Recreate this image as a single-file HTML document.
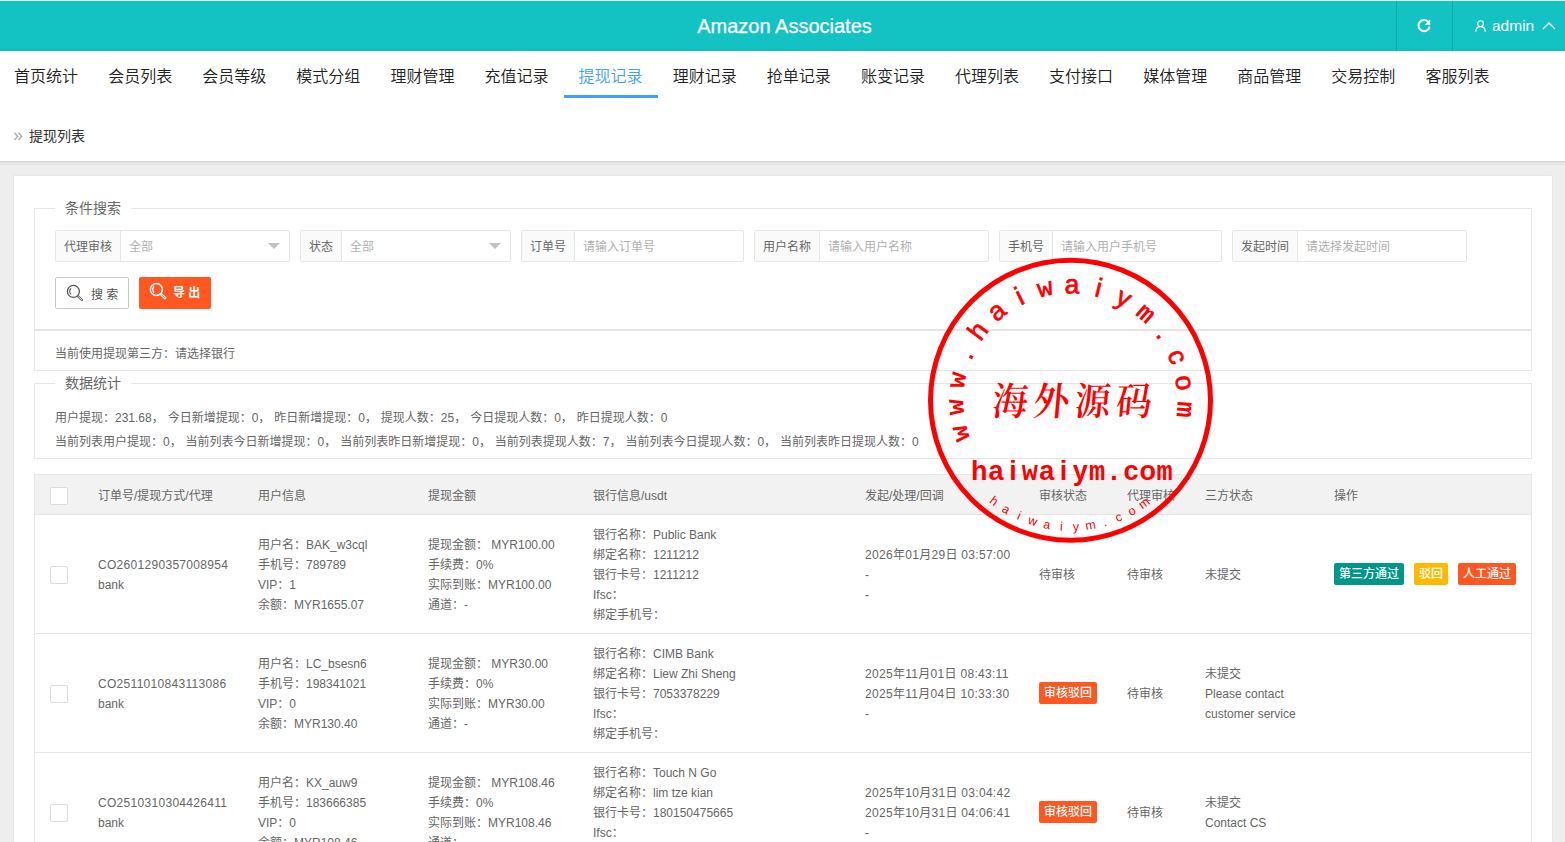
<!DOCTYPE html>
<html lang="zh-CN">
<head>
<meta charset="utf-8">
<title>Amazon Associates</title>
<style>
*{box-sizing:border-box;margin:0;padding:0}
html,body{width:1565px;height:842px;overflow:hidden}
body{background:#eeeeee;font-family:"Liberation Sans","Noto Sans CJK SC",sans-serif;font-size:12px;color:#666;position:relative}
.top{position:absolute;left:0;top:0;width:1565px;height:51px;background:#13c2c3;color:#fff;border-top:1px solid #f6e4e2}
.top .title{position:absolute;left:0;width:1569px;top:0;line-height:50px;text-align:center;font-size:20px;-webkit-text-stroke:.25px #fff}
.top .ref{position:absolute;left:1396px;top:0;width:56px;height:50px;border-left:1px solid #0ea8a9;}
.top .usr{position:absolute;left:1452px;top:0;width:113px;height:50px;border-left:1px solid #0ea8a9;font-size:15.5px;line-height:49px}
.head{position:absolute;left:-10px;top:51px;width:1585px;padding-left:10px;height:110px;background:#fff;box-shadow:0 1px 4px rgba(0,0,0,.16)}
.nav{position:absolute;left:9px;top:0;height:47px;white-space:nowrap}
.nav span{display:inline-block;width:94.1px;text-align:center;font-size:16px;line-height:52px;height:47px;color:#222;font-weight:350;vertical-align:top}
.nav span.on{color:#409eff;border-bottom:3px solid #409eff}
.crumb{position:absolute;left:24px;top:75px;font-size:14px;color:#333;line-height:20px}
.crumb i{font-style:normal;color:#aaa;display:inline-block;width:15px;font-size:18px;line-height:20px;vertical-align:top;position:relative;top:-1px;left:-1px}
.card{position:absolute;left:14px;top:176px;width:1538px;height:700px;background:#fff;box-shadow:0 0 2px rgba(0,0,0,.1)}
.fs{position:absolute;left:20px;width:1498px;border:1px solid #e6e6e6}
.fs .lg{position:absolute;left:20px;top:-11px;background:#fff;padding:0 10px;font-size:14px;line-height:20px;color:#666}
.grp{position:absolute;top:21px;height:32px;border:1px solid #e6e6e6;border-radius:2px;background:#fff;display:flex;font-size:12px;line-height:33px;overflow:hidden}
.grp .lb{background:#fafafa;border-right:1px solid #e6e6e6;padding:0 8px;color:#666;white-space:nowrap}
.grp .ph{padding-left:8px;color:#b0b0b0;flex:1;position:relative}
.grp .ph.sel:after{content:"";position:absolute;right:9px;top:12px;border:6px solid transparent;border-top-color:#c2c2c2;border-bottom-width:0}
.btn{position:absolute;top:68px;height:32px;border-radius:2px;font-size:12px;line-height:30px}
.tbl{position:absolute;left:20px;top:298px;width:1498px;border:1px solid #e6e6e6;border-bottom:0}
.tr{display:flex;border-bottom:1px solid #e6e6e6;height:119px;align-items:center}
.tr.th{height:40px;background:#f2f2f2}
.tr .td{position:relative;top:1px}
.n{letter-spacing:.3px}
.td{padding:0 15px;line-height:20px;white-space:nowrap;flex:none}
.cb{display:block;width:18px;height:18px;border:1px solid #dcdcdc;border-radius:2px;background:#fff}
.tag{display:inline-block;height:22px;line-height:23px;padding:0 5px;border-radius:2px;color:#fff;font-size:12px;vertical-align:middle;position:relative;top:-1px;font-weight:500}
</style>
</head>
<body>
<div class="top">
  <div class="title">Amazon Associates</div>
  <div class="ref"><svg width="18" height="18" viewBox="0 0 18 18" style="position:absolute;left:18px;top:16px"><path d="M13.6 5.2 A5.6 5.6 0 1 0 14.6 9.6" fill="none" stroke="#fff" stroke-width="2.1"/><path d="M15.2 2.6 L15.2 8 L9.8 8 Z" fill="#fff"/></svg></div>
  <div class="usr"><svg width="13" height="13" viewBox="0 0 14 14" style="position:absolute;left:21px;top:18px"><circle cx="7" cy="5" r="3.1" fill="none" stroke="#fff" stroke-width="1.3"/><path d="M1.9 13.6 C1.9 9.6 4.4 8.1 7 8.1 C9.6 8.1 12.1 9.6 12.1 13.6" fill="none" stroke="#fff" stroke-width="1.3"/></svg><span style="position:absolute;left:39px;top:0">admin</span><svg width="16" height="10" viewBox="0 0 16 10" style="position:absolute;left:88px;top:20px"><path d="M2 8 L8 2 L14 8" fill="none" stroke="#fff" stroke-width="1.3"/></svg></div>
</div>
<div class="head">
  <div class="nav"><span>首页统计</span><span>会员列表</span><span>会员等级</span><span>模式分组</span><span>理财管理</span><span>充值记录</span><span class="on">提现记录</span><span>理财记录</span><span>抢单记录</span><span>账变记录</span><span>代理列表</span><span>支付接口</span><span>媒体管理</span><span>商品管理</span><span>交易控制</span><span>客服列表</span></div>
  <div class="crumb"><i>»</i>提现列表</div>
</div>
<div class="card">
  <div class="fs" style="top:32px;height:122px">
    <div class="lg">条件搜索</div>
    <div class="grp" style="left:20px;width:235px"><div class="lb">代理审核</div><div class="ph sel">全部</div></div>
    <div class="grp" style="left:265px;width:211px"><div class="lb">状态</div><div class="ph sel">全部</div></div>
    <div class="grp" style="left:486px;width:223px"><div class="lb">订单号</div><div class="ph">请输入订单号</div></div>
    <div class="grp" style="left:719px;width:235px"><div class="lb">用户名称</div><div class="ph">请输入用户名称</div></div>
    <div class="grp" style="left:964px;width:223px"><div class="lb">手机号</div><div class="ph">请输入用户手机号</div></div>
    <div class="grp" style="left:1197px;width:235px"><div class="lb">发起时间</div><div class="ph">请选择发起时间</div></div>
    <div class="btn b1" style="left:20px;width:74px;border:1px solid #c9c9c9;background:#fff;color:#555"><svg width="20" height="20" viewBox="0 0 20 20" style="position:absolute;left:9px;top:5px"><circle cx="8.4" cy="8.4" r="6" fill="none" stroke="#555" stroke-width="1.3"/><path d="M6.1 5.4 A3.9 3.9 0 0 0 6.1 11.4" fill="none" stroke="#555" stroke-width="1.1"/><path d="M13.2 13.4 L17 17" stroke="#666" stroke-width="2.4" stroke-linecap="round"/><path d="M13.5 13.7 L16.8 16.8" stroke="#fff" stroke-width=".8" stroke-linecap="round"/></svg><span style="position:absolute;left:35px;top:2px">搜 索</span></div>
    <div class="btn b2" style="left:104px;width:72px;background:#ff5722;color:#fff"><svg width="20" height="20" viewBox="0 0 20 20" style="position:absolute;left:9px;top:4px"><circle cx="8.4" cy="8.4" r="6" fill="none" stroke="#fff" stroke-width="1.5"/><path d="M6.1 5.4 A3.9 3.9 0 0 0 6.1 11.4" fill="none" stroke="#fff" stroke-width="1.3"/><path d="M13.2 13.4 L17 17" stroke="#fff" stroke-width="2.6" stroke-linecap="round"/><path d="M13.6 13.8 L16.7 16.7" stroke="#ff5722" stroke-width=".7" stroke-linecap="round"/></svg><span style="position:absolute;left:34px;top:1px;font-weight:bold">导 出</span></div>
  </div>
  <div class="fs" style="top:154px;height:41px;border-top-color:#e2e2e2"><div class="ln" style="position:absolute;left:20px;top:13px;line-height:20px">当前使用提现第三方：请选择银行</div></div>
  <div class="fs" style="top:207px;height:76px">
    <div class="lg">数据统计</div>
    <div class="ln" style="position:absolute;left:20px;top:22px;line-height:24px;white-space:nowrap;word-spacing:.6px">用户提现：231.68， 今日新增提现：0， 昨日新增提现：0， 提现人数：25， 今日提现人数：0， 昨日提现人数：0<br>当前列表用户提现：0， 当前列表今日新增提现：0， 当前列表昨日新增提现：0， 当前列表提现人数：7， 当前列表今日提现人数：0， 当前列表昨日提现人数：0</div>
  </div>
  <div class="tbl">
    <div class="tr th">
      <div class="td" style="width:48px"><i class="cb"></i></div>
      <div class="td" style="width:160px">订单号/提现方式/代理</div>
      <div class="td" style="width:170px">用户信息</div>
      <div class="td" style="width:165px">提现金额</div>
      <div class="td" style="width:272px">银行信息/usdt</div>
      <div class="td" style="width:174px">发起/处理/回调</div>
      <div class="td" style="width:88px">审核状态</div>
      <div class="td" style="width:78px">代理审核</div>
      <div class="td" style="width:129px">三方状态</div>
      <div class="td" style="width:212px">操作</div>
    </div>
    <div class="tr">
      <div class="td" style="width:48px"><i class="cb"></i></div>
      <div class="td" style="width:160px"><span class="n">CO2601290357008954</span><br>bank</div>
      <div class="td" style="width:170px">用户名：BAK_w3cql<br>手机号：789789<br>VIP：1<br>余额：MYR1655.07</div>
      <div class="td" style="width:165px">提现金额： MYR100.00<br>手续费：0%<br>实际到账：MYR100.00<br>通道：-</div>
      <div class="td" style="width:272px">银行名称：Public Bank<br>绑定名称：1211212<br>银行卡号：1211212<br>Ifsc：<br>绑定手机号：</div>
      <div class="td" style="width:174px"><span class="n">2026年01月29日 03:57:00</span><br>-<br>-</div>
      <div class="td" style="width:88px">待审核</div>
      <div class="td" style="width:78px">待审核</div>
      <div class="td" style="width:129px">未提交</div>
      <div class="td" style="width:212px"><span class="tag" style="background:#009688">第三方通过</span><span class="tag" style="background:#ffb800;margin-left:10px">驳回</span><span class="tag" style="background:#ff5722;margin-left:10px">人工通过</span></div>
    </div>
    <div class="tr">
      <div class="td" style="width:48px"><i class="cb"></i></div>
      <div class="td" style="width:160px"><span class="n">CO2511010843113086</span><br>bank</div>
      <div class="td" style="width:170px">用户名：LC_bsesn6<br>手机号：198341021<br>VIP：0<br>余额：MYR130.40</div>
      <div class="td" style="width:165px">提现金额： MYR30.00<br>手续费：0%<br>实际到账：MYR30.00<br>通道：-</div>
      <div class="td" style="width:272px">银行名称：CIMB Bank<br>绑定名称：Liew Zhi Sheng<br>银行卡号：7053378229<br>Ifsc：<br>绑定手机号：</div>
      <div class="td" style="width:174px"><span class="n">2025年11月01日 08:43:11</span><br><span class="n">2025年11月04日 10:33:30</span><br>-</div>
      <div class="td" style="width:88px"><span class="tag" style="background:#ff5722">审核驳回</span></div>
      <div class="td" style="width:78px">待审核</div>
      <div class="td" style="width:129px">未提交<br>Please contact<br>customer service</div>
      <div class="td" style="width:212px"></div>
    </div>
    <div class="tr">
      <div class="td" style="width:48px"><i class="cb"></i></div>
      <div class="td" style="width:160px"><span class="n">CO2510310304426411</span><br>bank</div>
      <div class="td" style="width:170px">用户名：KX_auw9<br>手机号：183666385<br>VIP：0<br>余额：MYR108.46</div>
      <div class="td" style="width:165px">提现金额： MYR108.46<br>手续费：0%<br>实际到账：MYR108.46<br>通道：-</div>
      <div class="td" style="width:272px">银行名称：Touch N Go<br>绑定名称：lim tze kian<br>银行卡号：180150475665<br>Ifsc：<br>绑定手机号：</div>
      <div class="td" style="width:174px"><span class="n">2025年10月31日 03:04:42</span><br><span class="n">2025年10月31日 04:06:41</span><br>-</div>
      <div class="td" style="width:88px"><span class="tag" style="background:#ff5722">审核驳回</span></div>
      <div class="td" style="width:78px">待审核</div>
      <div class="td" style="width:129px">未提交<br>Contact CS</div>
      <div class="td" style="width:212px"></div>
    </div>
  </div>
</div>
<svg class="stamp" width="1565" height="842" viewBox="0 0 1565 842" style="position:absolute;left:0;top:0;pointer-events:none">
<circle cx="1070.50" cy="400.35" r="140.0" fill="none" stroke="#ff0000" stroke-width="5.0"/>
<text font-family="Liberation Sans, sans-serif" font-size="26.5" fill="#ff0000" stroke="#ff0000" stroke-width="0.7" x="970.3 964.1 963.8 970.9 980.6 996.6 1020.7 1039.1 1064.4 1093.7 1114.0 1134.6 1155.3 1167.0 1175.1 1177.8" y="438.7 414.4 389.3 361.0 341.9 322.6 305.6 297.7 293.3 295.8 302.4 314.3 335.0 353.7 376.7 401.0" rotate="-106.7 -93.3 -79.9 -66.4 -53.0 -39.6 -26.2 -12.8 0.7 14.1 27.5 40.9 54.3 67.8 81.2 94.6"><tspan font-family="Liberation Mono, monospace" font-weight="bold" stroke-width="0">www</tspan>.hai<tspan font-family="Liberation Mono, monospace" font-weight="bold" stroke-width="0">w</tspan>aiy<tspan font-family="Liberation Mono, monospace" font-weight="bold" stroke-width="0">m</tspan>.co<tspan font-family="Liberation Mono, monospace" font-weight="bold" stroke-width="0">m</tspan></text>
<text font-family="Noto Serif CJK SC, serif" font-weight="600" font-size="38.5" fill="#ff0000" transform="translate(1073.8 414.6) skewX(-5) scale(0.93 1)" letter-spacing="5.9" text-anchor="middle" x="0" y="0">海外源码</text>
<text font-family="Liberation Sans, sans-serif" font-weight="bold" font-size="27" fill="#ff0000" x="971.1 988.6 1009.2 1021.7 1039.2 1059.7 1072.8 1089.1 1110.3 1123.4 1139.5 1156.4" y="480.2">hai<tspan font-family="Liberation Mono, monospace">w</tspan>aiy<tspan font-family="Liberation Mono, monospace">m</tspan>.co<tspan font-family="Liberation Mono, monospace">m</tspan></text>
<text font-family="Liberation Sans, sans-serif" font-size="12.5" fill="#ff0000" x="988.8 1001.1 1016.2 1027.3 1042.8 1059.8 1073.1 1086.1 1104.3 1117.3 1130.7 1142.3" y="502.2 510.9 519.0 523.6 527.9 530.4 530.9 530.0 526.4 522.2 516.2 509.5" rotate="37.2 30.6 24.0 17.3 10.7 4.1 -2.5 -9.1 -15.8 -22.4 -29.0 -35.6">haiwaiym.com</text>
</svg>
</body>
</html>
